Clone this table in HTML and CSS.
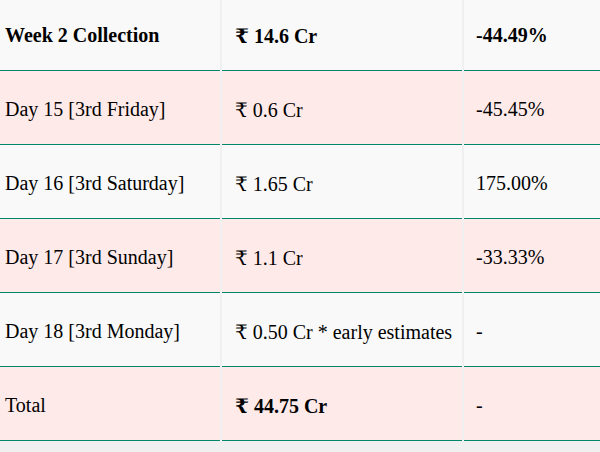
FILE: index.html
```
<!DOCTYPE html>
<html>
<head>
<meta charset="utf-8">
<link rel="stylesheet" href="styles.css">
</head>
<body>
<table class="collection">
  <tbody>
    <tr class="row-light strong">
      <td class="c1">Week 2 Collection</td>
      <td class="c2">₹ 14.6 Cr</td>
      <td class="c3">-44.49%</td>
    </tr>
    <tr class="row-pink">
      <td>Day 15 [3rd Friday]</td>
      <td>₹ 0.6 Cr</td>
      <td>-45.45%</td>
    </tr>
    <tr class="row-light">
      <td>Day 16 [3rd Saturday]</td>
      <td>₹ 1.65 Cr</td>
      <td>175.00%</td>
    </tr>
    <tr class="row-pink">
      <td>Day 17 [3rd Sunday]</td>
      <td>₹ 1.1 Cr</td>
      <td>-33.33%</td>
    </tr>
    <tr class="row-light">
      <td>Day 18 [3rd Monday]</td>
      <td>₹ 0.50 Cr * early estimates</td>
      <td>-</td>
    </tr>
    <tr class="row-pink">
      <td>Total</td>
      <td class="bold">₹ 44.75 Cr</td>
      <td>-</td>
    </tr>
  </tbody>
</table>
</body>
</html>
```
FILE: styles.css
```
html, body {
  margin: 0;
  padding: 0;
  background: #f0f0f0;
}
body {
  overflow: hidden;
  font-family: "Liberation Serif", "DejaVu Serif", serif;
  font-size: 20px;
  color: #000;
}
.collection {
  border-collapse: separate;
  border-spacing: 2px 0;
  table-layout: fixed;
  width: 629px;
  margin: -3px 0 0 -9px;
}
.collection td {
  box-sizing: border-box;
  height: 74px;
  padding: 4px 12px 0;
  vertical-align: middle;
  border-bottom: 1px solid #00876b;
  white-space: nowrap;
}
.collection td.c1 { width: 227px; }
.collection td.c2 { width: 240px; }
.collection td.c3 { width: 158px; }
.collection td:nth-child(2) { padding-left: 13px; }
.row-light td { background: #f9f9f9; }
.row-pink td { background: #ffeaea; }
.strong td { font-weight: bold; }
.bold { font-weight: bold; }
```
